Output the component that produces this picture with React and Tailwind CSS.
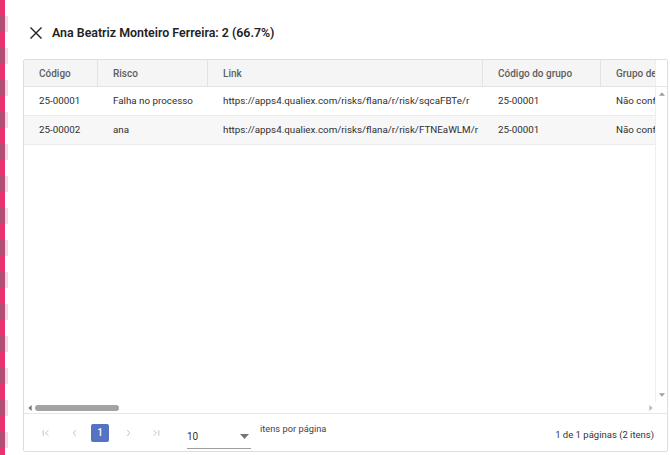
import React from "react";

const cols = [
  { label: "Código", w: 74 },
  { label: "Risco", w: 110 },
  { label: "Link", w: 275 },
  { label: "Código do grupo", w: 118 },
  { label: "Grupo de risco", w: 140 },
];

const rows = [
  ["25-00001", "Falha no processo", "https://apps4.qualiex.com/risks/flana/r/risk/sqcaFBTe/r", "25-00001", "Não conformidade"],
  ["25-00002", "ana", "https://apps4.qualiex.com/risks/flana/r/risk/FTNEaWLM/r", "25-00001", "Não conformidade"],
];

function LeftStrip() {
  const segs = Array.from({ length: 15 });
  return (
    <div className="flex flex-col w-[8px] h-[455px] shrink-0">
      {segs.map((_, i) => (
        <div key={i} className="flex h-[32px] shrink-0 flex-col">
          <div className="h-[16px] w-[5px] bg-[#e8336e]" />
          <div className="h-[16px] flex">
            <div className="w-[5px] bg-[#b34d72]" />
            <div className="w-[3px] bg-[#fbd3ea]" />
          </div>
        </div>
      ))}
    </div>
  );
}

export default function App() {
  return (
    <div
      className="w-[670px] h-[455px] bg-white flex overflow-hidden"
      style={{ fontFamily: "Roboto, 'Liberation Sans', sans-serif" }}
    >
      <LeftStrip />
      <div className="flex flex-col pl-[15px] pt-[20px] w-[659px]">
        <div className="flex items-center h-[26px] pl-[7px] gap-[10px]">
          <svg width="12" height="12" viewBox="0 0 12 12" className="shrink-0">
            <path d="M1 1 L11 11 M11 1 L1 11" stroke="#222" strokeWidth="1.4" strokeLinecap="square" />
          </svg>
          <span className="text-[12.4px] font-semibold text-[#222]">
            Ana Beatriz Monteiro Ferreira: 2 (66.7%)
          </span>
        </div>
        <div className="mt-[13px] w-[645px] h-[393px] border border-[#dedede] rounded-[2px] flex flex-col">
          <div className="flex h-[342px] shrink-0">
            <div className="w-[631px] overflow-hidden flex flex-col">
              <div className="flex h-[27px] bg-[#f5f5f5] border-b border-[#e3e3e3] shrink-0">
                {cols.map((c, i) => (
                  <div
                    key={i}
                    style={{ width: c.w }}
                    className="shrink-0 h-full flex items-center pl-[15px] border-r border-[#e3e3e3] text-[10px] font-medium text-[#5f5f5f] whitespace-nowrap"
                  >
                    {c.label}
                  </div>
                ))}
              </div>
              {rows.map((r, ri) => (
                <div
                  key={ri}
                  className={`flex h-[29px] shrink-0 border-b border-[#ebebeb] ${ri === 1 ? "bg-[#f7f7f7]" : "bg-white"}`}
                >
                  {r.map((cell, ci) => (
                    <div
                      key={ci}
                      style={{ width: cols[ci].w }}
                      className="shrink-0 h-full flex items-center pl-[15px] text-[9.8px] text-[#2f2f2f] whitespace-nowrap overflow-hidden"
                    >
                      {cell}
                    </div>
                  ))}
                </div>
              ))}
            </div>
            <div className="w-[12px] flex flex-col border-l border-[#eeeeee]">
              <div className="h-[27px] border-b border-[#e3e3e3]" />
              <div className="flex-1 flex flex-col justify-between items-center py-[5px]">
                <svg width="6" height="4" viewBox="0 0 7 4"><path d="M0 4 L3.5 0 L7 4Z" fill="#9e9e9e" /></svg>
                <svg width="6" height="4" viewBox="0 0 7 4"><path d="M0 0 L3.5 4 L7 0Z" fill="#9e9e9e" /></svg>
              </div>
            </div>
          </div>
          <div className="h-[12px] flex items-center px-[4px] gap-[3px] border-b border-[#e6e6e6] shrink-0">
            <svg width="4" height="6" viewBox="0 0 4 7"><path d="M4 0 L0 3.5 L4 7Z" fill="#777" /></svg>
            <div className="w-[84px] h-[6px] rounded-full bg-[#a3a3a3]" />
            <div className="flex-1" />
            <svg width="4" height="6" viewBox="0 0 4 7" className="mr-[10px]"><path d="M0 0 L4 3.5 L0 7Z" fill="#bbb" /></svg>
          </div>
          <div className="h-[37px] shrink-0 flex items-center pl-[8px] pr-[13px] text-[#333]">
            <div className="flex items-center h-full">
              <div className="w-[28px] flex justify-center">
                <svg width="8" height="8" viewBox="0 0 10 9"><path d="M1.5 1 V8 M8 1 L4.5 4.5 L8 8" stroke="#bdbdbd" strokeWidth="1.1" fill="none" /></svg>
              </div>
              <div className="w-[28px] flex justify-center">
                <svg width="5" height="8" viewBox="0 0 6 9"><path d="M4.5 1 L1.5 4.5 L4.5 8" stroke="#bdbdbd" strokeWidth="1.1" fill="none" /></svg>
              </div>
              <div className="w-[18px] h-[18px] ml-[3px] rounded-[2px] bg-[#5573c2] text-white text-[10px] flex items-center justify-center font-medium">
                1
              </div>
              <div className="w-[39px] flex justify-center">
                <svg width="5" height="8" viewBox="0 0 6 9"><path d="M1.5 1 L4.5 4.5 L1.5 8" stroke="#bdbdbd" strokeWidth="1.1" fill="none" /></svg>
              </div>
              <div className="w-[16px] flex justify-center">
                <svg width="8" height="8" viewBox="0 0 10 9"><path d="M8.5 1 V8 M2 1 L5.5 4.5 L2 8" stroke="#bdbdbd" strokeWidth="1.1" fill="none" /></svg>
              </div>
              <div className="ml-[23px] w-[64px] h-[24px] mt-[8px] border-b border-[#9e9e9e] flex items-center justify-between">
                <span className="text-[10px] text-[#333]">10</span>
                <svg width="9" height="5" viewBox="0 0 9 5" className="mr-[2px]"><path d="M0 0 L4.5 5 L9 0Z" fill="#757575" /></svg>
              </div>
              <span className="ml-[9px] mb-[8px] text-[9.3px] text-[#444]">itens por página</span>
            </div>
            <div className="flex-1" />
            <span className="text-[9.5px] text-[#333] mt-[6px]">1 de 1 páginas (2 itens)</span>
          </div>
        </div>
      </div>
    </div>
  );
}
